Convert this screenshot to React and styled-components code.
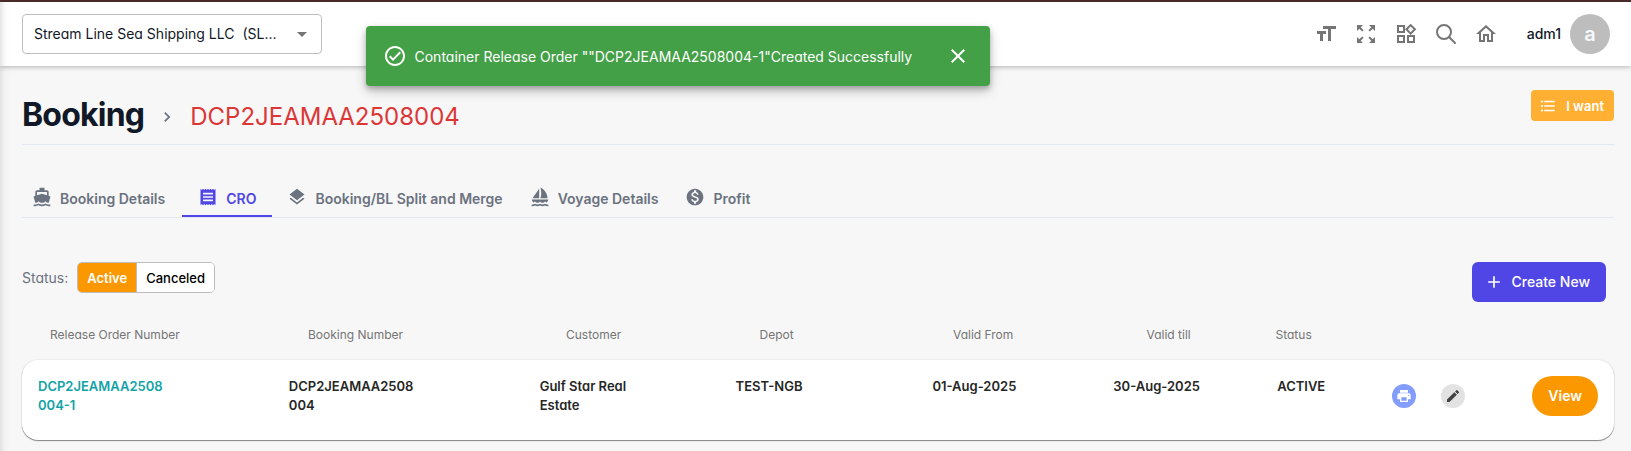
import React from "react";
import styled, { createGlobalStyle, css } from "styled-components";
import {
  MdFormatSize, MdZoomOutMap, MdOutlineWidgets, MdOutlineHome, MdOutlineCheckCircle, MdClose,
  MdArrowDropDown, MdChevronRight, MdFormatListBulleted, MdDirectionsBoat, MdReceipt, MdLayers, MdSailing,
  MdMonetizationOn, MdAdd, MdPrint, MdEdit,
} from "react-icons/md";

const GlobalStyle = createGlobalStyle`
  *, *::before, *::after { box-sizing: border-box; }
  html { background: #f7f7f7; }
  body {
    margin: 0;
    font-family: Inter, "Liberation Sans", sans-serif;
    font-size: 14px;
    line-height: 20px;
    color: #111827;
  }
  button, select { font: inherit; color: inherit; }
  button { cursor: pointer; border: 0; padding: 0; background: none; }
  a { color: inherit; text-decoration: none; }
`;

const singleStorey = css`
  font-feature-settings: "cv11";
`;

const Page = styled.div`
  border-top: 2px solid #4e2c2c;
  min-height: 100vh;
  background: linear-gradient(to right, #e2e2e2, #f3f3f3 5px, #f7f7f7 10px);
`;

const TopBar = styled.header`
  display: flex;
  align-items: center;
  justify-content: space-between;
  height: 64px;
  padding: 0 21px 0 22px;
  background: linear-gradient(to right, #e6e6e6, #fafafa 5px, #fff 10px);
  box-shadow: 0 1px 5px rgba(0, 0, 0, 0.28);
`;

const CompanyField = styled.div`
  position: relative;
  width: 300px;
`;

const CompanySelect = styled.select`
  ${singleStorey}
  appearance: none;
  width: 100%;
  height: 40px;
  padding: 0 44px 0 11px;
  border: 1px solid #bdbdbd;
  border-radius: 4px;
  background: #fff;
  white-space: pre;
`;

const SelectArrow = styled(MdArrowDropDown)`
  position: absolute;
  right: 8px;
  top: 8px;
  font-size: 24px;
  color: #757575;
  pointer-events: none;
`;

const Tools = styled.div`
  display: flex;
  align-items: center;
  gap: 16px;
`;

const ToolButton = styled.button`
  display: flex;
  align-items: center;
  justify-content: center;
  width: 24px;
  height: 24px;
  font-size: 24px;
  color: #757575;
`;

const Account = styled.button`
  display: flex;
  align-items: center;
  gap: 9px;
  margin-left: 13px;
  font-weight: 500;
`;

const Avatar = styled.span`
  display: grid;
  place-items: center;
  width: 40px;
  height: 40px;
  border-radius: 50%;
  background: #bdbdbd;
  color: #f5f7fa;
  font-size: 20px;
  font-weight: 600;
`;

const Toast = styled.div`
  ${singleStorey}
  position: absolute;
  top: 26px;
  left: calc(50% - 450px);
  display: flex;
  align-items: center;
  width: 624px;
  height: 60px;
  padding: 0 20px 0 17px;
  border-radius: 4px;
  background: #43a047;
  color: #fff;
  box-shadow: 0 3px 5px rgba(0, 0, 0, 0.2), 0 5px 12px rgba(0, 0, 0, 0.22);
  svg { font-size: 24px; }
  p { flex: 1; margin: 0; padding: 2px 0 0 8px; }
  button { display: flex; }
`;

const Main = styled.main`
  padding: 0 17px 10px 22px;
`;

const TitleRow = styled.div`
  display: flex;
  align-items: flex-start;
  justify-content: space-between;
  height: 79px;
  padding-top: 24px;
  border-bottom: 1px solid #e2e8f0;
`;

const Crumbs = styled.div`
  display: flex;
  align-items: center;
  padding-top: 1px;
  svg { margin: 4px 13px 0; font-size: 20px; color: #6b7280; }
`;

const Title = styled.h1`
  margin: 0;
  font-size: 32px;
  line-height: 48px;
  font-weight: 700;
  letter-spacing: -0.025em;
`;

const BookingNo = styled.span`
  padding-top: 4px;
  font-size: 24px;
  line-height: 32px;
  color: #dc3737;
`;

const Solid = styled.button`
  display: flex;
  align-items: center;
  justify-content: center;
  height: 40px;
  padding: 0 16px;
  border-radius: ${(p) => p.$radius || 6}px;
  background: ${(p) => p.$bg};
  color: #fff;
  font-weight: 600;
`;

const CreateButton = styled(Solid)`
  gap: 8px;
  padding-left: 12px;
  font-weight: 500;
  svg { font-size: 20px; }
`;

const WantButton = styled(Solid)`
  gap: 9px;
  height: 31px;
  padding: 0 10px 0 8px;
  font-size: 13px;
  svg { font-size: 18px; }
`;

const Tabs = styled.nav`
  display: flex;
  height: 73px;
  padding-top: 32px;
  border-bottom: 1px solid #e2e8f0;
`;

const Tab = styled.a`
  display: flex;
  align-items: center;
  gap: 8px;
  height: 40px;
  padding: 6px ${(p) => (p.$active ? 16 : 0)}px 0 ${(p) => (p.$active ? 16 : 10)}px;
  margin-right: ${(p) => (p.$active ? 5 : 17)}px;
  border-bottom: 2px solid ${(p) => (p.$active ? "#4f46e5" : "transparent")};
  font-weight: 600;
  color: ${(p) => (p.$active ? "#4f46e5" : "#6b7280")};
  svg { margin-bottom: 5px; font-size: 20px; }
`;

const ActionRow = styled.div`
  display: flex;
  align-items: flex-start;
  justify-content: space-between;
  padding: 44px 8px 0 0;
`;

const StatusFilter = styled.div`
  display: flex;
  align-items: center;
  gap: 9px;
  > span { ${singleStorey} color: #6b7280; }
`;

const Segments = styled.div`
  display: flex;
  height: 31px;
  overflow: hidden;
  border: 1px solid #bdbdbd;
  border-radius: 5px;
  background: #fff;
`;

const Segment = styled.button`
  padding: 0 9px;
  font-size: 13px;
  font-weight: ${(p) => (p.$on ? 600 : 500)};
  background: ${(p) => (p.$on ? "#fb9800" : "#fff")};
  color: ${(p) => (p.$on ? "#fff" : "#000")};
  & + & { border-left: 1px solid #bdbdbd; }
`;

const OrdersTable = styled.table`
  ${singleStorey}
  display: block;
  margin-top: 16px;
  thead, tbody { display: block; }
`;

const HeadRow = styled.tr`
  display: grid;
  grid-template-columns: 4fr 4fr 3fr 3fr 3fr 2fr 5fr;
  padding: 0 22px;
`;

const HeadCell = styled.th`
  padding: 8px 6px;
  font-size: 12px;
  line-height: 18px;
  font-weight: 400;
  text-align: left;
  color: #757575;
`;

const OrderRow = styled.tr`
  display: grid;
  grid-template-columns: 251fr 251fr 196fr 197fr 181fr 164fr 115fr 49fr 60fr 97fr;
  margin-top: 8px;
  min-height: 80px;
  padding: 16px;
  border-radius: 16px;
  background: #fff;
  box-shadow: 0 1px 1px rgba(0, 0, 0, 0.45), 0 0 2px rgba(0, 0, 0, 0.14);
`;

const Cell = styled.td`
  padding: 1px 0 0;
  font-size: 13px;
  line-height: 19px;
  font-weight: 600;
  color: #262626;
  a { color: #12a3a8; }
`;

const ActionCell = styled.td`
  display: flex;
  justify-content: ${(p) => (p.$end ? "flex-end" : "flex-start")};
  align-items: center;
  height: 40px;
  padding: 0;
`;

const RoundButton = styled.button`
  display: grid;
  place-items: center;
  width: 24px;
  height: 24px;
  border-radius: 50%;
  background: ${(p) => p.$bg};
  color: ${(p) => p.$fg};
  font-size: 16px;
`;

const SearchIcon = () => (
  <svg width="24" height="24" viewBox="0 0 24 24" fill="none" stroke="currentColor" strokeWidth="2" strokeLinecap="round">
    <circle cx="10" cy="10" r="7" />
    <path d="M15 15l6 6" />
  </svg>
);

const tabs = [
  { label: "Booking Details", icon: MdDirectionsBoat },
  { label: "CRO", icon: MdReceipt, active: true },
  { label: "Booking/BL Split and Merge", icon: MdLayers },
  { label: "Voyage Details", icon: MdSailing },
  { label: "Profit", icon: MdMonetizationOn },
];

const columns = ["Release Order Number", "Booking Number", "Customer", "Depot", "Valid From", "Valid till", "Status"];

export default function App() {
  return (
    <Page>
      <GlobalStyle />
      <TopBar>
        <CompanyField>
          <CompanySelect aria-label="Company">
            <option>{"Stream Line Sea Shipping LLC \u00a0(SL..."}</option>
          </CompanySelect>
          <SelectArrow />
        </CompanyField>
        <Tools>
          <ToolButton aria-label="Font size"><MdFormatSize /></ToolButton>
          <ToolButton aria-label="Full screen"><MdZoomOutMap /></ToolButton>
          <ToolButton aria-label="Apps"><MdOutlineWidgets /></ToolButton>
          <ToolButton aria-label="Search"><SearchIcon /></ToolButton>
          <ToolButton aria-label="Home"><MdOutlineHome /></ToolButton>
          <Account>adm1<Avatar>a</Avatar></Account>
        </Tools>
      </TopBar>
      <Toast role="alert">
        <MdOutlineCheckCircle />
        <p>Container Release Order ""DCP2JEAMAA2508004-1"Created Successfully</p>
        <button aria-label="Close"><MdClose /></button>
      </Toast>
      <Main>
        <TitleRow>
          <Crumbs>
            <Title>Booking</Title>
            <MdChevronRight />
            <BookingNo>DCP2JEAMAA2508004</BookingNo>
          </Crumbs>
          <WantButton $bg="#ffb033" $radius={4}><MdFormatListBulleted />I want</WantButton>
        </TitleRow>
        <Tabs>
          {tabs.map(({ label, icon: Icon, active }) => (
            <Tab key={label} href="#" $active={active}><Icon />{label}</Tab>
          ))}
        </Tabs>
        <ActionRow>
          <StatusFilter>
            <span>Status:</span>
            <Segments>
              <Segment $on>Active</Segment>
              <Segment>Canceled</Segment>
            </Segments>
          </StatusFilter>
          <CreateButton $bg="#4f46e5"><MdAdd />Create New</CreateButton>
        </ActionRow>
        <OrdersTable>
          <thead>
            <HeadRow>
              {columns.map((c) => <HeadCell key={c}>{c}</HeadCell>)}
            </HeadRow>
          </thead>
          <tbody>
            <OrderRow>
              <Cell><a href="#">DCP2JEAMAA2508<br />004-1</a></Cell>
              <Cell>DCP2JEAMAA2508<br />004</Cell>
              <Cell>Gulf Star Real<br />Estate</Cell>
              <Cell>TEST-NGB</Cell>
              <Cell>01-Aug-2025</Cell>
              <Cell>30-Aug-2025</Cell>
              <Cell>ACTIVE</Cell>
              <ActionCell><RoundButton aria-label="Print" $bg="#839dfd" $fg="#fff"><MdPrint /></RoundButton></ActionCell>
              <ActionCell><RoundButton aria-label="Edit" $bg="#e2e2e2" $fg="#424242"><MdEdit /></RoundButton></ActionCell>
              <ActionCell $end><Solid $bg="#fb9800" $radius={20}>View</Solid></ActionCell>
            </OrderRow>
          </tbody>
        </OrdersTable>
      </Main>
    </Page>
  );
}
